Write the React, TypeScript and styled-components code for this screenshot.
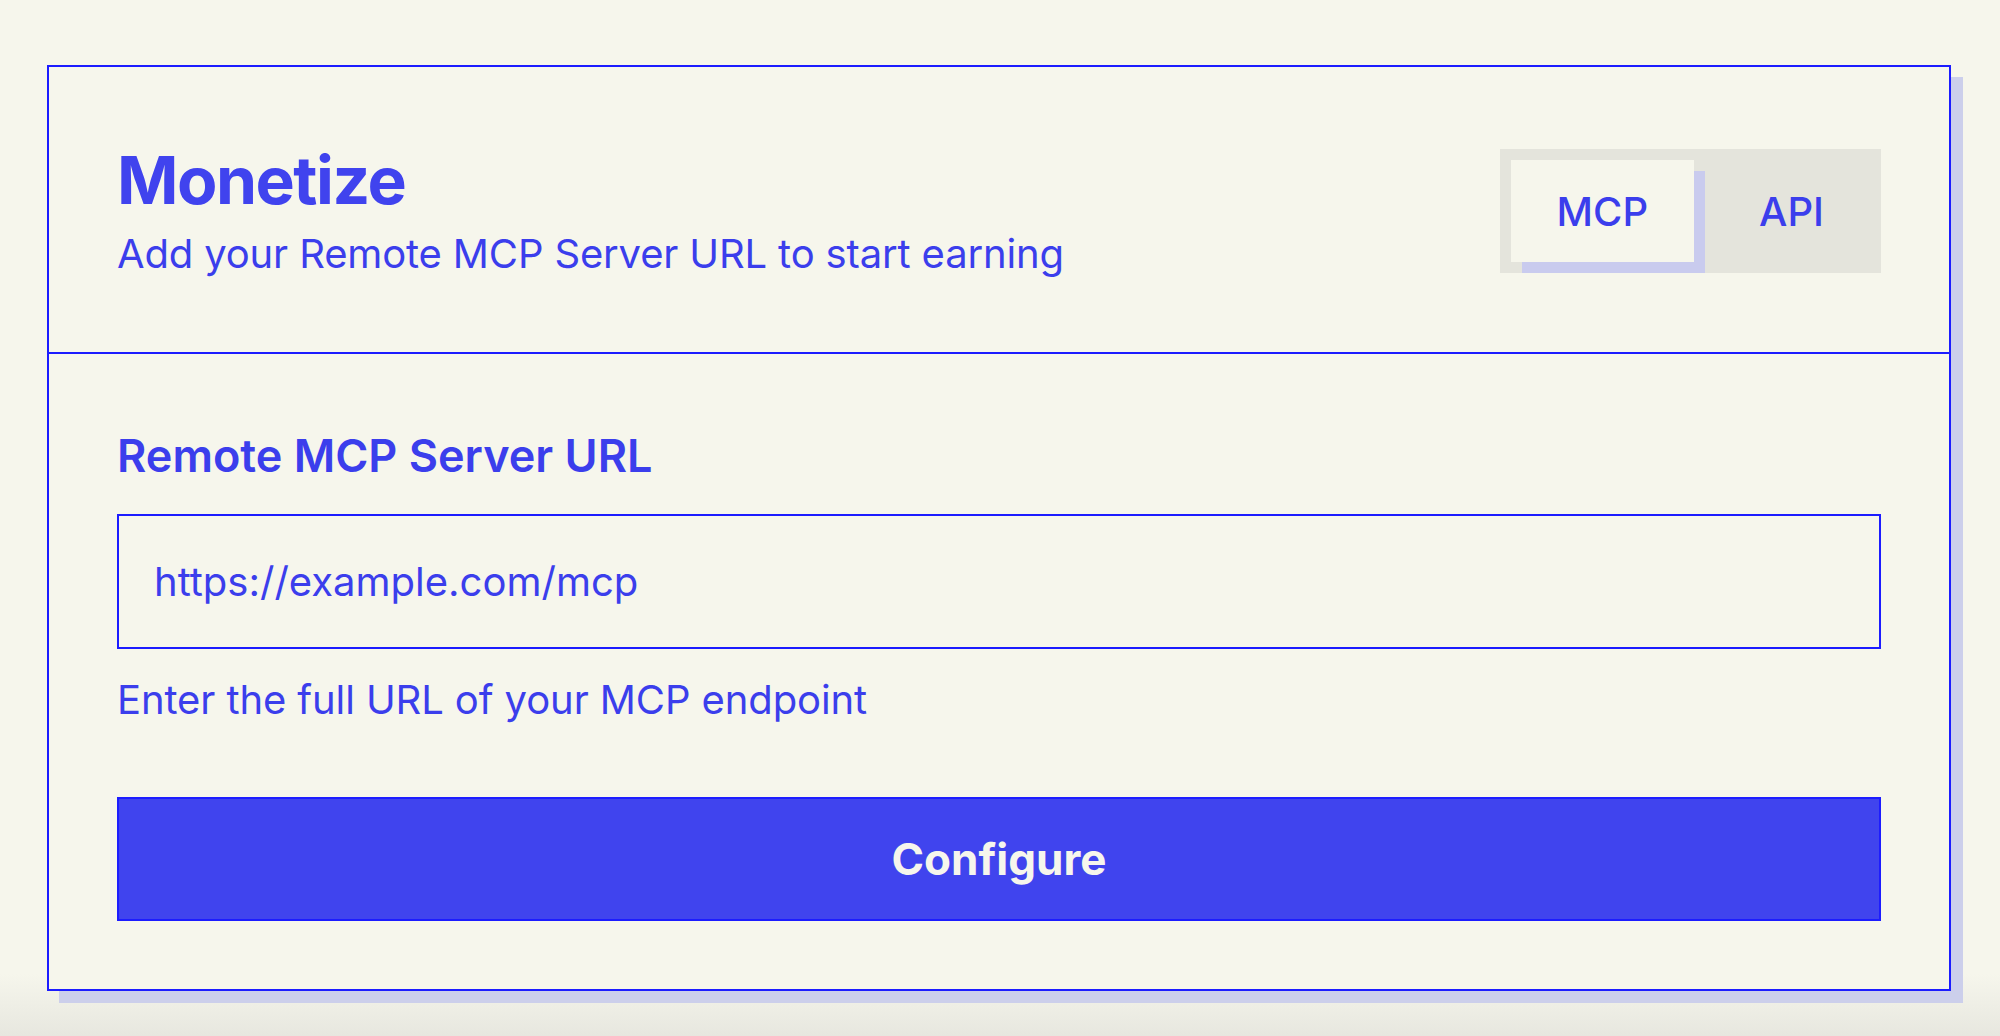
import React, { useState } from "react";
import styled, { createGlobalStyle } from "styled-components";

const GlobalStyle = createGlobalStyle`
  html, body {
    margin: 0;
    padding: 0;
  }
  body {
    min-height: 1036px;
    background: linear-gradient(180deg, #f6f6ec 0%, #f6f6ec 94%, #e7e7df 100%);
    font-family: Inter, "Noto Sans", "Liberation Sans", sans-serif;
    color: #3b3eec;
  }
  * {
    box-sizing: border-box;
  }
`;

type TMode = "MCP" | "API";

const MODES: TMode[] = ["MCP", "API"];

const App = () => {
  const [mode, setMode] = useState<TMode>("MCP");
  const [url, setUrl] = useState("https://example.com/mcp");

  return (
    <>
      <GlobalStyle />
      <Page>
        <Card>
          <Header>
            <HeaderText>
              <Title>Monetize</Title>
              <Subtitle>Add your Remote MCP Server URL to start earning</Subtitle>
            </HeaderText>
            <Toggle>
              {MODES.map(m => (
                <ToggleButton
                  key={"mode_" + m}
                  active={m === mode}
                  onClick={() => setMode(m)}
                >
                  {m}
                </ToggleButton>
              ))}
            </Toggle>
          </Header>
          <Body>
            <Label htmlFor="server-url">Remote MCP Server URL</Label>
            <UrlInput
              id="server-url"
              type="text"
              value={url}
              onChange={e => setUrl(e.target.value)}
            />
            <Hint>Enter the full URL of your MCP endpoint</Hint>
            <SubmitButton type="button">Configure</SubmitButton>
          </Body>
        </Card>
      </Page>
    </>
  );
};

const Page = styled.div`
  padding: 65px 49px 0 47px;
`;

const Card = styled.section`
  border: 2px solid #1c1cff;
  background-color: #f6f6ec;
  box-shadow: 12px 12px 0 #cccfeb;
`;

const Header = styled.div`
  display: flex;
  align-items: center;
  justify-content: space-between;
  padding: 71px 68px 68px 68px;
  border-bottom: 2px solid #1c1cff;
`;

const HeaderText = styled.div`
  display: flex;
  flex-direction: column;
  gap: 2px;
`;

const Title = styled.h1`
  margin: 0;
  font-size: 66px;
  line-height: 84px;
  font-weight: 700;
  letter-spacing: -1.5px;
  color: #4043ee;
`;

const Subtitle = styled.p`
  margin: 0;
  font-size: 40px;
  line-height: 60px;
  font-weight: 400;
  letter-spacing: -0.15px;
`;

const Toggle = styled.div`
  display: flex;
  gap: 19px;
  padding: 11px;
  background-color: #e4e4dc;
`;

const ToggleButton = styled.button<{ active: boolean }>`
  border: none;
  margin: 0;
  height: 102px;
  padding: 0 46px;
  font-family: inherit;
  font-size: 40px;
  font-weight: 500;
  color: #3b3eec;
  cursor: pointer;
  background-color: ${props => (props.active ? "#f6f6ec" : "transparent")};
  box-shadow: ${props => (props.active ? "11px 11px 0 #c9cbee" : "none")};
`;

const Body = styled.div`
  display: flex;
  flex-direction: column;
  padding: 69px 68px 68px 68px;
`;

const Label = styled.label`
  font-size: 45px;
  line-height: 66px;
  font-weight: 600;
`;

const UrlInput = styled.input`
  margin-top: 25px;
  height: 135px;
  padding: 0 35px;
  border: 2px solid #1c1cff;
  border-radius: 0;
  background-color: transparent;
  font-family: inherit;
  font-size: 40px;
  color: #3b3eec;
  outline: none;
`;

const Hint = styled.p`
  margin: 21px 0 0 0;
  font-size: 40px;
  line-height: 60px;
  letter-spacing: -0.1px;
`;

const SubmitButton = styled.button`
  margin-top: 67px;
  height: 124px;
  border: 2px solid #1c1cff;
  background-color: #4044ee;
  color: #f6f6ec;
  font-family: inherit;
  font-size: 44px;
  font-weight: 700;
  cursor: pointer;
`;

export default App;
